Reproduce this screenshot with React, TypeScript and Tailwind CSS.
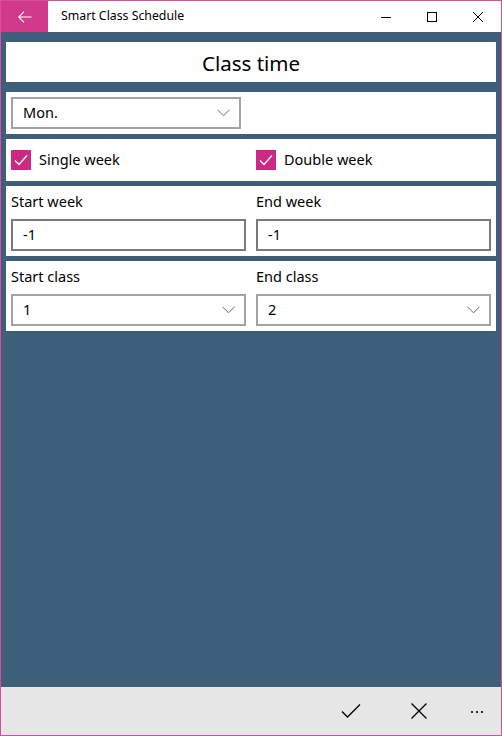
import React from 'react';

const Chevron: React.FC = () => (
  <svg width="13" height="8" viewBox="0 0 13 8" className="shrink-0">
    <path d="M0.5 0.8 L6.5 6.8 L12.5 0.8" fill="none" stroke="#6b6b6b" strokeWidth="1" />
  </svg>
);

const Check: React.FC = () => (
  <span className="w-5 h-5 bg-[#cc2a82] flex items-center justify-center shrink-0">
    <svg width="14" height="12" viewBox="0 0 14 12">
      <path d="M1 6.5 L5 10.5 L13 1.5" fill="none" stroke="#ffffff" strokeWidth="1.3" />
    </svg>
  </span>
);

const Select: React.FC<{ value: string; className?: string }> = ({ value, className }) => (
  <div
    className={
      'h-8 border-2 border-[#a3a3a3] bg-white flex items-center justify-between pl-[10px] pr-[9px] text-[14.5px] text-black ' +
      (className ?? '')
    }
  >
    <span>{value}</span>
    <Chevron />
  </div>
);

const Input: React.FC<{ value: string }> = ({ value }) => (
  <div className="h-8 border-2 border-[#7a7a7a] bg-white flex items-center pl-[10px] text-[14.5px] text-black">
    {value}
  </div>
);

const Field: React.FC<{ label: string; children: React.ReactNode }> = ({ label, children }) => (
  <div className="flex-1 flex flex-col">
    <div className="h-[22px] leading-[20px] text-[14.5px] text-black">{label}</div>
    <div className="mt-[6px]">{children}</div>
  </div>
);

export default function App() {
  return (
    <div className="w-[502px] h-[736px] border border-[#d84d9c] flex flex-col bg-white font-['Segoe_UI','Noto_Sans',sans-serif]">
      {/* title bar */}
      <div className="h-[31px] flex items-center bg-white">
        <div className="w-[47px] h-full bg-[#d13a8b] flex items-center justify-center">
          <svg width="14" height="12" viewBox="0 0 14 12">
            <path d="M6 0.7 L0.8 6 L6 11.3 M0.8 6 H13.5" fill="none" stroke="#ffffff" strokeWidth="1.1" />
          </svg>
        </div>
        <div className="ml-[13px] text-[12.3px] text-black flex-1">Smart Class Schedule</div>
        <div className="flex items-center h-full">
          <div className="w-[46px] h-full flex items-center justify-center">
            <svg width="10" height="10" viewBox="0 0 10 10">
              <path d="M0 5.5 H10" stroke="#000" strokeWidth="1" />
            </svg>
          </div>
          <div className="w-[46px] h-full flex items-center justify-center">
            <svg width="10" height="10" viewBox="0 0 10 10">
              <rect x="0.5" y="0.5" width="9" height="9" fill="none" stroke="#000" strokeWidth="1" />
            </svg>
          </div>
          <div className="w-[46px] h-full flex items-center justify-center">
            <svg width="10" height="10" viewBox="0 0 10 10">
              <path d="M0 0 L10 10 M10 0 L0 10" stroke="#000" strokeWidth="1" />
            </svg>
          </div>
        </div>
      </div>

      {/* content */}
      <div className="flex-1 bg-[#3e5f79] px-[5px] pt-[10px] flex flex-col">
        <div className="h-10 bg-white flex items-center justify-center pt-[3px] text-[20.5px] text-black">
          Class time
        </div>

        <div className="mt-[10px] bg-white p-[5px]">
          <Select value="Mon." className="w-[230px]" />
        </div>

        <div className="mt-[5px] h-[42px] bg-white px-[5px] flex items-center gap-[10px]">
          <div className="flex-1 flex items-center gap-2">
            <Check />
            <span className="text-[14.5px] text-black">Single week</span>
          </div>
          <div className="flex-1 flex items-center gap-2">
            <Check />
            <span className="text-[14.5px] text-black">Double week</span>
          </div>
        </div>

        <div className="mt-[5px] bg-white p-[5px] flex gap-[10px]">
          <Field label="Start week">
            <Input value="-1" />
          </Field>
          <Field label="End week">
            <Input value="-1" />
          </Field>
        </div>

        <div className="mt-[5px] bg-white p-[5px] flex gap-[10px]">
          <Field label="Start class">
            <Select value="1" />
          </Field>
          <Field label="End class">
            <Select value="2" />
          </Field>
        </div>
      </div>

      {/* command bar */}
      <div className="h-12 bg-[#e6e6e6] flex items-center justify-end">
        <div className="w-[68px] h-full flex items-center justify-center">
          <svg width="20" height="16" viewBox="0 0 20 16">
            <path d="M1 8.5 L6.5 14 L19 1.5" fill="none" stroke="#000" strokeWidth="1.3" />
          </svg>
        </div>
        <div className="w-[68px] h-full flex items-center justify-center">
          <svg width="16" height="16" viewBox="0 0 16 16">
            <path d="M0.5 0.5 L15.5 15.5 M15.5 0.5 L0.5 15.5" stroke="#000" strokeWidth="1.3" />
          </svg>
        </div>
        <div className="w-[48px] h-full flex items-center justify-center pt-[2px]">
          <svg width="14" height="4" viewBox="0 0 14 4">
            <circle cx="2" cy="2" r="1.1" fill="#000" />
            <circle cx="7" cy="2" r="1.1" fill="#000" />
            <circle cx="12" cy="2" r="1.1" fill="#000" />
          </svg>
        </div>
      </div>
    </div>
  );
}
